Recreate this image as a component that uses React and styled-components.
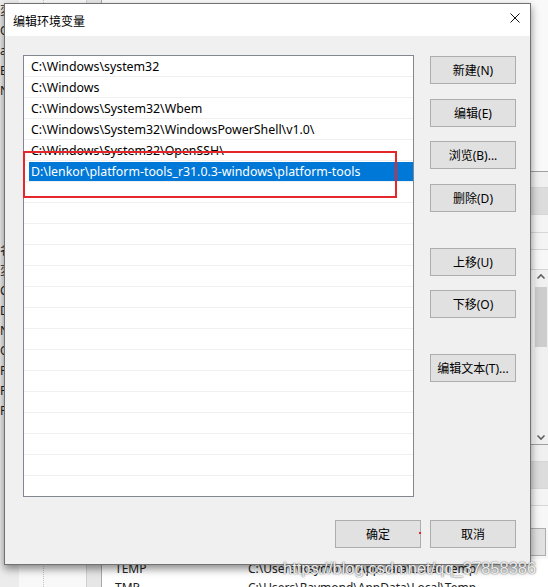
import React from 'react';
import styled, { createGlobalStyle } from 'styled-components';

const UI_FONT = `"Noto Sans", "Noto Sans CJK SC", sans-serif`;

const GlobalStyle = createGlobalStyle`
  html, body {
    margin: 0;
    padding: 0;
    background: #f7f7f7;
  }
  body {
    font-family: ${UI_FONT};
  }
`;

const paths = [
  'C:\\Windows\\system32',
  'C:\\Windows',
  'C:\\Windows\\System32\\Wbem',
  'C:\\Windows\\System32\\WindowsPowerShell\\v1.0\\',
  'C:\\Windows\\System32\\OpenSSH\\',
  'D:\\lenkor\\platform-tools_r31.0.3-windows\\platform-tools',
];
const SELECTED = 5;
const ROW_COUNT = 21;

const sideButtons = [
  { label: '新建(N)', top: 0 },
  { label: '编辑(E)', top: 15 },
  { label: '浏览(B)...', top: 14 },
  { label: '删除(D)', top: 15 },
  { label: '上移(U)', top: 36 },
  { label: '下移(O)', top: 14 },
  { label: '编辑文本(T)...', top: 36 },
];

const sideLabels = ['変量', 'OneDrive', 'admin', 'EDITOR', 'NUMBER', '', '', '', '', '', '', '',
  '名称', '変数', 'ComSpec', 'DriverData', 'NUMBER_OF', 'OS', 'Path', 'PATHEXT', 'PROCESSOR'];

const App = () => {
  const rows = Array.from({ length: ROW_COUNT }, (_, i) => paths[i] || '');

  return (
    <>
      <GlobalStyle />
      <Desktop>
        <BackWindow>
          <BackSidebar>
            {sideLabels.map((l, i) => (
              <BackLabel key={i}>{l}</BackLabel>
            ))}
          </BackSidebar>
          <BackNav>
            <DottedLine />
          </BackNav>
          <BackSplit />
          <BackMain>
            <BackHeader />
            <BackBand $h={16} $bg="#f0f0f0" />
            <BackBand $h={27} $bg="#dcdcdc" />
            <BackBand $h={18} $bg="#f4f4f4" />
            <BackBand $h={17} $bg="#f4f4f4" />
            <BackBand $h={20} $bg="#f7f7f7" />
            <BackList>
              <BackListBody />
              <Scrollbar>
                <ScrollArrow viewBox="0 0 14 14">
                  <path d="M3.5 8.5 L7 5 L10.5 8.5" />
                </ScrollArrow>
                <ScrollThumb />
                <ScrollTrack />
                <ScrollArrow viewBox="0 0 14 14">
                  <path d="M3.5 5.5 L7 9 L10.5 5.5" />
                </ScrollArrow>
              </Scrollbar>
            </BackList>
            <BackBand $h={17} $bg="#f0f0f0" />
            <BackBand $h={27} $bg="#dcdcdc" />
            <BackBand $h={17} $bg="#f4f4f4" />
            <BackFooter>
              <BackButton />
            </BackFooter>
            <BackRow>
              <BackName>TEMP</BackName>
              <BackValue>C:\Users\Raymond\AppData\Local\Temp</BackValue>
            </BackRow>
            <BackRow>
              <BackName>TMP</BackName>
              <BackValue>C:\Users\Raymond\AppData\Local\Temp</BackValue>
            </BackRow>
          </BackMain>
        </BackWindow>

        <Dialog>
          <TitleBar>
            <Title>编辑环境变量</Title>
            <CloseButton aria-label="关闭">
              <svg width="10" height="10" viewBox="0 0 10 10">
                <path d="M0.5 0.5 L9.5 9.5 M9.5 0.5 L0.5 9.5" stroke="#111" strokeWidth="1" />
              </svg>
            </CloseButton>
          </TitleBar>
          <Body>
            <Main>
              <ListBox>
                {rows.map((p, i) => (
                  <Row key={i}>
                    <Cell $selected={i === SELECTED}>{p}</Cell>
                  </Row>
                ))}
              </ListBox>
              <ButtonColumn>
                {sideButtons.map((b) => (
                  <DlgButton key={b.label} $top={b.top}>{b.label}</DlgButton>
                ))}
              </ButtonColumn>
            </Main>
            <Footer>
              <DlgButton>确定</DlgButton>
              <DlgButton>取消</DlgButton>
            </Footer>
          </Body>
        </Dialog>

        <Highlight />
        <RedDot />
        <Watermark>https://blog.csdn.net/qq_37858386</Watermark>
      </Desktop>
    </>
  );
};

const Desktop = styled.div`
  position: relative;
  width: 548px;
  height: 587px;
  overflow: hidden;
  background: #f7f7f7;
  font-family: ${UI_FONT};
`;

/* window behind the dialog */
const BackWindow = styled.div`
  position: absolute;
  inset: 0;
  display: flex;
  font-size: 12px;
  color: #1a1a1a;
`;

const BackSidebar = styled.div`
  width: 19px;
  flex: none;
  background: #ececec;
  overflow: hidden;
  padding-top: 1px;
`;

const BackLabel = styled.div`
  height: 20px;
  line-height: 20px;
  white-space: nowrap;
`;

const BackNav = styled.div`
  width: 67px;
  flex: none;
  background: #f8f8f8;
  padding-left: 24px;
  box-sizing: border-box;
`;

const DottedLine = styled.div`
  height: 100%;
  border-left: 1px dotted #c4c4c4;
`;

const BackSplit = styled.div`
  width: 14px;
  flex: none;
  background: #e6e6e6;
  border-left: 1px solid #cfcfcf;
  border-right: 1px solid #a9a9a9;
`;

const BackMain = styled.div`
  flex: 1;
  display: flex;
  flex-direction: column;
  background: #fff;
`;

const BackHeader = styled.div`
  height: 171px;
  flex: none;
  background: #f9f9f9;
  border-bottom: 1px solid #9f9f9f;
`;

const BackBand = styled.div`
  height: ${(p) => p.$h}px;
  flex: none;
  box-sizing: border-box;
  background: ${(p) => p.$bg};
  border-bottom: 1px solid #d6d6d6;
`;

const BackList = styled.div`
  height: 175px;
  flex: none;
  display: flex;
  border-bottom: 1px solid #9f9f9f;
  box-sizing: border-box;
`;

const BackListBody = styled.div`
  flex: 1;
  background: #fff;
`;

const Scrollbar = styled.div`
  width: 14px;
  display: flex;
  flex-direction: column;
  background: #f0f0f0;
`;

const ScrollArrow = styled.svg`
  width: 14px;
  height: 14px;
  flex: none;
  fill: none;
  stroke: #606060;
  stroke-width: 1.6;
`;

const ScrollThumb = styled.div`
  height: 60px;
  margin: 3px 1px 0;
  background: #cdcdcd;
`;

const ScrollTrack = styled.div`
  flex: 1;
`;

const BackFooter = styled.div`
  height: 50px;
  flex: none;
  display: flex;
  justify-content: flex-end;
  align-items: flex-end;
  padding: 0 2px 3px 0;
  background: #f7f7f7;
`;

const BackButton = styled.div`
  width: 16px;
  height: 26px;
  background: #e1e1e1;
  border: 1px solid #adadad;
`;

const BackRow = styled.div`
  height: 19px;
  flex: none;
  display: flex;
  align-items: center;
  font-family: "Noto Sans", sans-serif;
  font-size: 12px;
  color: #222;
`;

const BackName = styled.div`
  width: 133px;
  padding-left: 13px;
`;

const BackValue = styled.div`
  white-space: nowrap;
`;

/* dialog */
const Dialog = styled.section`
  position: absolute;
  left: 4px;
  top: 3px;
  width: 527px;
  height: 562px;
  box-sizing: border-box;
  display: flex;
  flex-direction: column;
  border: 1px solid #727272;
  background: #f0f0f0;
  box-shadow: 0 4px 8px rgba(0, 0, 0, 0.45);
  font-size: 12px;
  color: #000;
`;

const TitleBar = styled.div`
  height: 32px;
  flex: none;
  display: flex;
  align-items: center;
  background: #fff;
`;

const Title = styled.div`
  padding-left: 8px;
  font-size: 12px;
  font-family: "Noto Sans CJK SC", sans-serif;
`;

const CloseButton = styled.div`
  margin-left: auto;
  align-self: flex-start;
  width: 30px;
  height: 28px;
  display: flex;
  align-items: center;
  justify-content: center;
`;

const Body = styled.div`
  flex: 1;
  display: flex;
  flex-direction: column;
  padding: 19px 14px 16px 18px;
`;

const Main = styled.div`
  display: flex;
  gap: 16px;
`;

const ListBox = styled.div`
  width: 391px;
  height: 442px;
  box-sizing: border-box;
  border: 1px solid #828790;
  background: #fff;
  overflow: hidden;
  font-size: 12.35px;
`;

const Row = styled.div`
  height: 21px;
  box-sizing: border-box;
  display: flex;
  padding: 1px 0 0 5px;
  border-bottom: 1px solid #f0f0f0;
`;

const Cell = styled.div`
  flex: 1;
  display: flex;
  align-items: center;
  padding-left: 2px;
  white-space: nowrap;
  background: ${(p) => (p.$selected ? '#0078d7' : 'transparent')};
  color: ${(p) => (p.$selected ? '#fff' : '#000')};
`;

const ButtonColumn = styled.div`
  display: flex;
  flex-direction: column;
  padding-top: 1px;
`;

const DlgButton = styled.button`
  width: 86px;
  height: 28px;
  flex: none;
  box-sizing: border-box;
  margin: ${(p) => p.$top || 0}px 0 0;
  padding: 0;
  border: 1px solid #adadad;
  background: #e1e1e1;
  font-family: ${UI_FONT};
  font-size: 12px;
  color: #000;
`;

const Footer = styled.div`
  display: flex;
  justify-content: flex-end;
  gap: 9px;
  margin-top: 23px;
`;

/* annotations painted over the screenshot */
const Highlight = styled.div`
  position: absolute;
  left: 23px;
  top: 151px;
  width: 374px;
  height: 47px;
  box-sizing: border-box;
  border: 2px solid #e5262a;
  pointer-events: none;
`;

const RedDot = styled.div`
  position: absolute;
  left: 419px;
  top: 532px;
  width: 2px;
  height: 2px;
  background: #e5262a;
`;

const Watermark = styled.div`
  position: absolute;
  left: 283px;
  top: 558px;
  font-family: "Liberation Sans", Arial, sans-serif;
  font-size: 16.5px;
  line-height: 20px;
  white-space: nowrap;
  color: rgba(255, 255, 255, 0.9);
  text-shadow: 0 0 1px rgba(60, 60, 60, 0.8), 0 0 2px rgba(90, 90, 90, 0.5);
  pointer-events: none;
`;

export default App;
